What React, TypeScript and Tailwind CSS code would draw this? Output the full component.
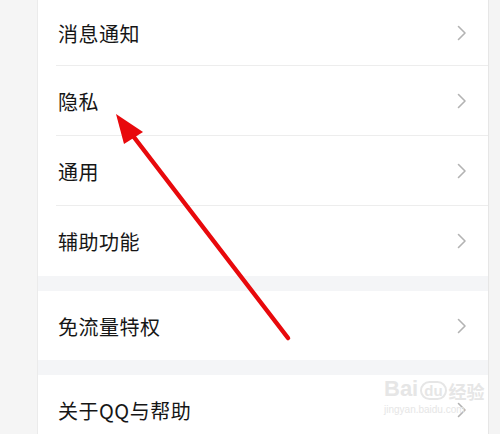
type Row = { label: string; h: string; last?: boolean }

const groups: Row[][] = [
  [
    { label: '消息通知', h: 'h-[66px]' },
    { label: '隐私', h: 'h-[70px]' },
    { label: '通用', h: 'h-[70px]' },
    { label: '辅助功能', h: 'h-[70px]', last: true },
  ],
  [{ label: '免流量特权', h: 'h-[69px]', last: true }],
  [{ label: '关于QQ与帮助', h: 'h-[70px]', last: true }],
]

function Chevron() {
  return (
    <svg width="10" height="16" viewBox="0 0 10 16" fill="none">
      <polyline points="1.5,1.5 8,8 1.5,14.5" stroke="#b3b3b3" strokeWidth="1.6" strokeLinecap="round" strokeLinejoin="round" />
    </svg>
  )
}

function SettingRow({ row }: { row: Row }) {
  return (
    <div className="pl-[18px]">
      <div
        className={`${row.h} flex items-center justify-between pl-[2px] pr-[21px] ${
          row.last ? '' : 'border-b border-[#ededed]'
        }`}
      >
        <span className="text-[20px] text-[#161616] tracking-[0.5px] pt-[2px]">{row.label}</span>
        <Chevron />
      </div>
    </div>
  )
}

export default function App() {
  return (
    <div
      className="relative w-[500px] h-[434px] overflow-hidden flex bg-[#f4f5f7]"
      style={{ fontFamily: '"Noto Sans CJK SC", "Noto Sans", sans-serif' }}
    >
      {/* left edge */}
      <div className="w-[38px] shrink-0 bg-[#f5f5f5] border-r border-[#ebebeb]" />

      {/* settings list */}
      <main className="w-[450px] shrink-0 flex flex-col">
        {groups.map((g, i) => (
          <div key={i} className={i > 0 ? 'mt-[15px]' : ''}>
            <div className="bg-white">
              {g.map(r => (
                <SettingRow key={r.label} row={r} />
              ))}
            </div>
          </div>
        ))}
      </main>

      {/* right edge */}
      <div className="flex-1 bg-[#f4f4f4] border-l border-[#e6e6e6]" />

      {/* red annotation arrow */}
      <svg className="absolute inset-0 pointer-events-none" width="500" height="434">
        <line x1="288" y1="338" x2="130" y2="132" stroke="#e8090c" strokeWidth="4.5" strokeLinecap="round" />
        <polygon points="116,114 143,132 124,144" fill="#e8090c" />
      </svg>

      {/* watermark */}
      <div className="absolute left-[384px] top-[378px] flex flex-col items-start text-[#e6e6e6] pointer-events-none">
        <div className="flex items-end leading-none">
          <span className="text-[22px] font-bold" style={{ fontFamily: '"Liberation Sans", sans-serif' }}>Bai</span>
          <span className="text-[15px] font-bold border-2 border-[#e6e6e6] rounded-full px-[2px] mx-[2px]" style={{ fontFamily: '"Liberation Sans", sans-serif' }}>du</span>
          <span className="text-[18px] font-bold">经验</span>
        </div>
        <span className="text-[10px] mt-[2px]" style={{ fontFamily: '"Liberation Sans", sans-serif' }}>jingyan.baidu.com</span>
      </div>
    </div>
  )
}
